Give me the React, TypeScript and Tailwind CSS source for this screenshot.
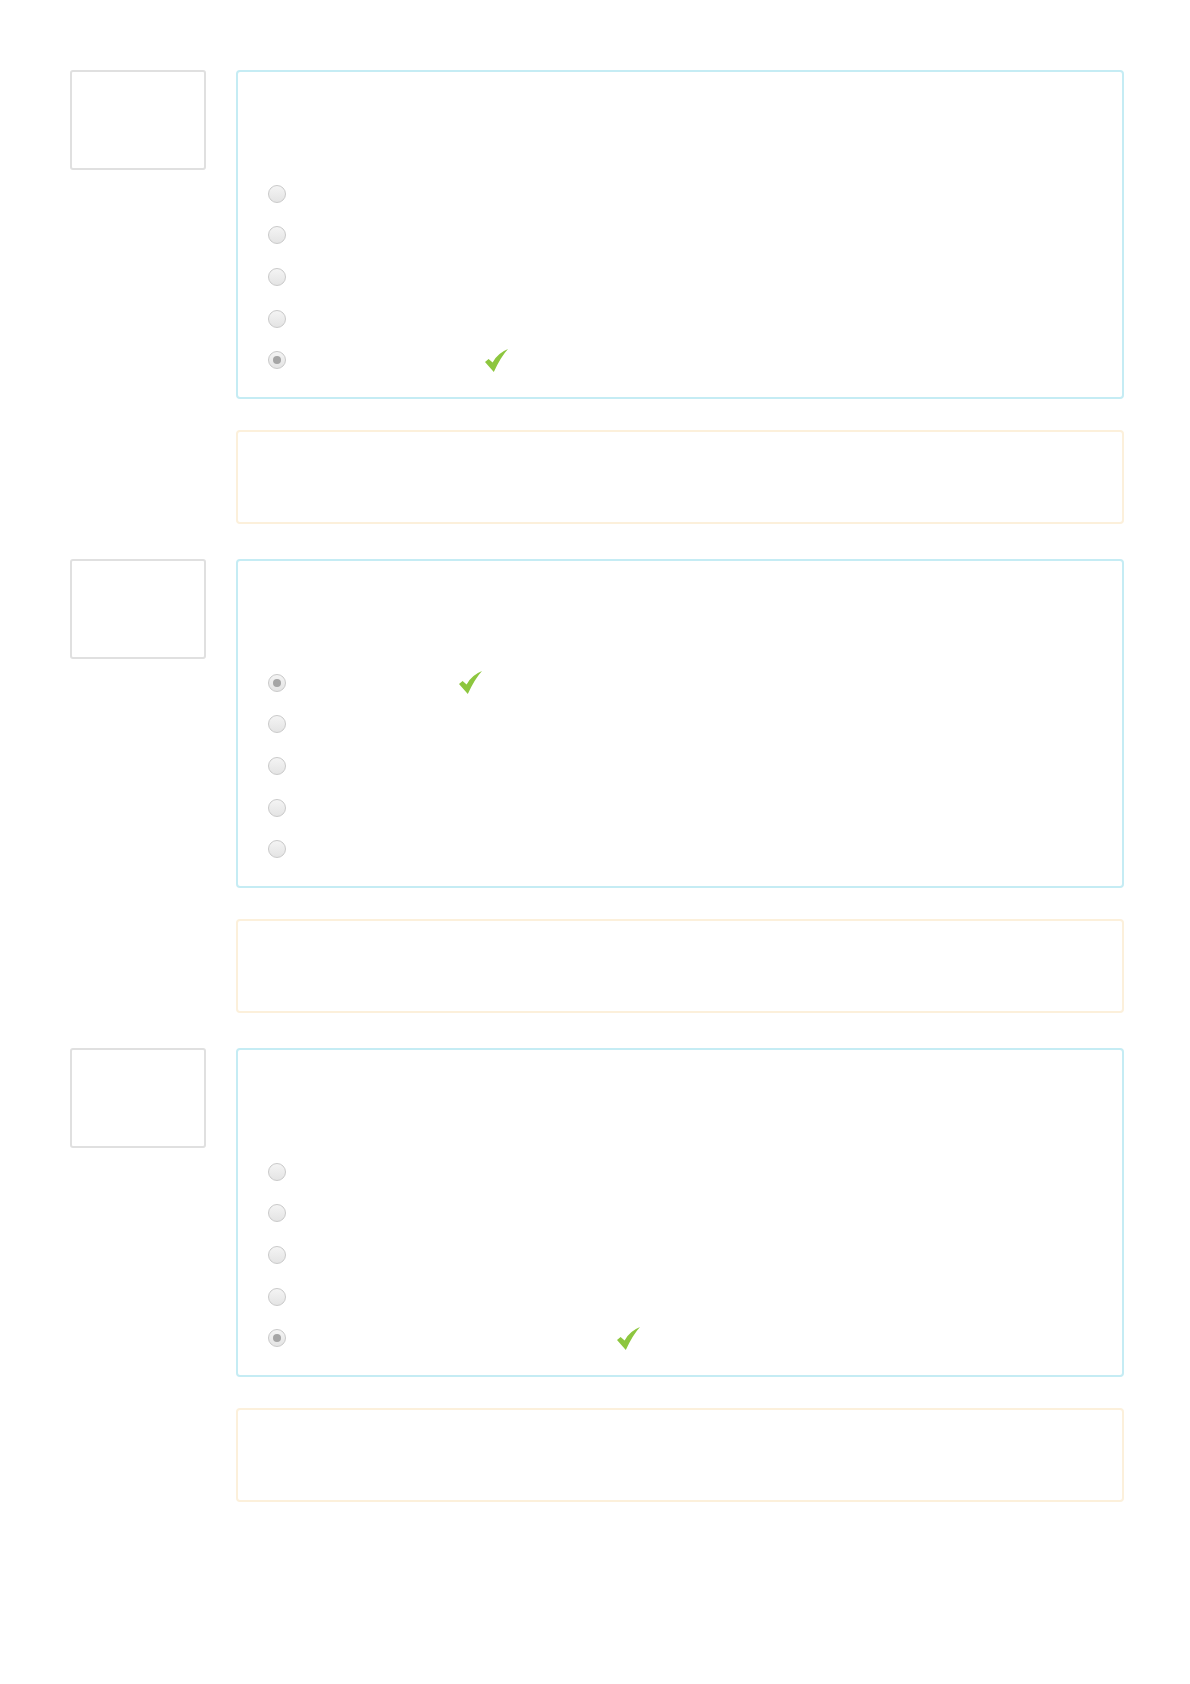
import React from 'react';

type Question = {
    selected: number;
    checkGap: number; // space between radio and tick, where the (blank) answer label sits
};

const questions: Question[] = [
    { selected: 4, checkGap: 199 },
    { selected: 0, checkGap: 173 },
    { selected: 4, checkGap: 331 },
];

const Tick: React.FC = () => (
    <svg width="23" height="23" viewBox="0 0 23 23" className="shrink-0">
        <path d="M0 13 L3.6 10 L7.6 13.4 Q12.5 4.2 23 0 Q15.8 7.8 8.8 23 Z" fill="#8dc63f" />
    </svg>
);

const Radio: React.FC<{ checked?: boolean }> = ({ checked }) => (
    <div className="w-[18px] h-[18px] shrink-0 rounded-full border-[1.5px] border-[#c9c9c9] bg-gradient-to-b from-[#f4f4f4] to-[#e4e4e4] flex items-center justify-center">
        {checked && <div className="w-[8px] h-[8px] rounded-full bg-[#a5a5a5]" />}
    </div>
);

const QuestionBlock: React.FC<{ q: Question }> = ({ q }) => (
    <div className="flex items-start mb-[35px]">
        <div className="w-[136px] h-[100px] rounded-[3px] border-2 border-[#e0e0e0] bg-white" />
        <div className="ml-[30px] flex flex-col w-[888px]">
            <div className="h-[329px] rounded-[4px] border-2 border-[#c5ecf4] bg-white pt-[101px] pl-[30px]">
                {[0, 1, 2, 3, 4].map(i => (
                    <div key={i} className="h-[41.6px] flex items-center">
                        <Radio checked={i === q.selected} />
                        {i === q.selected && (
                            <>
                                <span className="shrink-0" style={{ width: q.checkGap }} />
                                <Tick />
                            </>
                        )}
                    </div>
                ))}
            </div>
            <div className="mt-[31px] h-[94px] rounded-[4px] border-2 border-[#fcf0db] bg-white" />
        </div>
    </div>
);

export default function App() {
    return (
        <div className="min-h-[1684px] bg-white pt-[70px] pl-[70px] font-['Liberation_Sans',sans-serif]">
            {questions.map((q, i) => <QuestionBlock key={i} q={q} />)}
        </div>
    );
}
